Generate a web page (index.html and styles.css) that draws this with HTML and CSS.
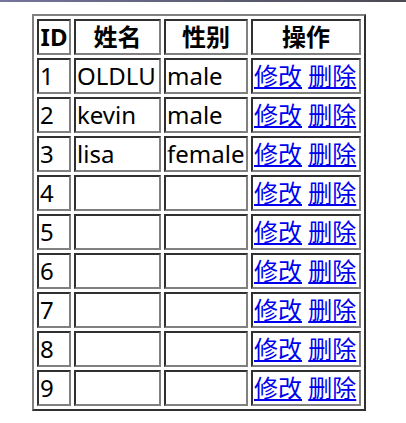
FILE: index.html
```html
<!DOCTYPE html>
<html lang="zh">
<head>
<meta charset="utf-8">
<link rel="stylesheet" href="styles.css">
</head>
<body>
<div class="topbar"></div>
<table class="grid">
  <thead>
    <tr><th class="c-id">ID</th><th class="c-name">姓名</th><th class="c-sex">性别</th><th class="c-op">操作</th></tr>
  </thead>
  <tbody>
    <tr><td>1</td><td>OLDLU</td><td>male</td><td><a href="#">修改</a> <a href="#">删除</a></td></tr>
    <tr><td>2</td><td>kevin</td><td>male</td><td><a href="#">修改</a> <a href="#">删除</a></td></tr>
    <tr><td>3</td><td>lisa</td><td>female</td><td><a href="#">修改</a> <a href="#">删除</a></td></tr>
    <tr><td>4</td><td></td><td></td><td><a href="#">修改</a> <a href="#">删除</a></td></tr>
    <tr><td>5</td><td></td><td></td><td><a href="#">修改</a> <a href="#">删除</a></td></tr>
    <tr><td>6</td><td></td><td></td><td><a href="#">修改</a> <a href="#">删除</a></td></tr>
    <tr><td>7</td><td></td><td></td><td><a href="#">修改</a> <a href="#">删除</a></td></tr>
    <tr><td>8</td><td></td><td></td><td><a href="#">修改</a> <a href="#">删除</a></td></tr>
    <tr><td>9</td><td></td><td></td><td><a href="#">修改</a> <a href="#">删除</a></td></tr>
  </tbody>
</table>
</body>
</html>
```

FILE: styles.css
```css
html, body {
  margin: 0;
  padding: 0;
  background: #ffffff;
}

body {
  font-family: "Noto Sans", "Noto Sans CJK SC", sans-serif;
  font-size: 24px;
  color: #000;
}

.topbar {
  height: 2px;
  background: linear-gradient(to right, #76749c, #5a5a6e 60%, #4a4a52);
}

.grid {
  margin: 12px 0 0 32px;
  border-collapse: separate;
  border-spacing: 3px;
  border: 2px solid;
  border-color: #808080 #303030 #303030 #808080;
  table-layout: fixed;
}

.grid th,
.grid td {
  border: 2px solid;
  border-color: #303030 #808080 #808080 #303030;
  padding: 0 1px;
  white-space: nowrap;
  overflow: hidden;
  vertical-align: middle;
}

.cell {
  display: block;
  height: 32px;
  line-height: 32px;
}

.grid th {
  font-weight: bold;
  text-align: center;
  height: 32px;
  line-height: 32px;
}

.grid td {
  text-align: left;
  height: 32px;
  line-height: 32px;
}

.c-id { width: 28px; }
.c-name { width: 81px; }
.c-sex { width: 78px; }
.c-op { width: 104px; }

.grid a {
  color: #0000ee;
  text-decoration: underline;
  vertical-align: top;
}
```
